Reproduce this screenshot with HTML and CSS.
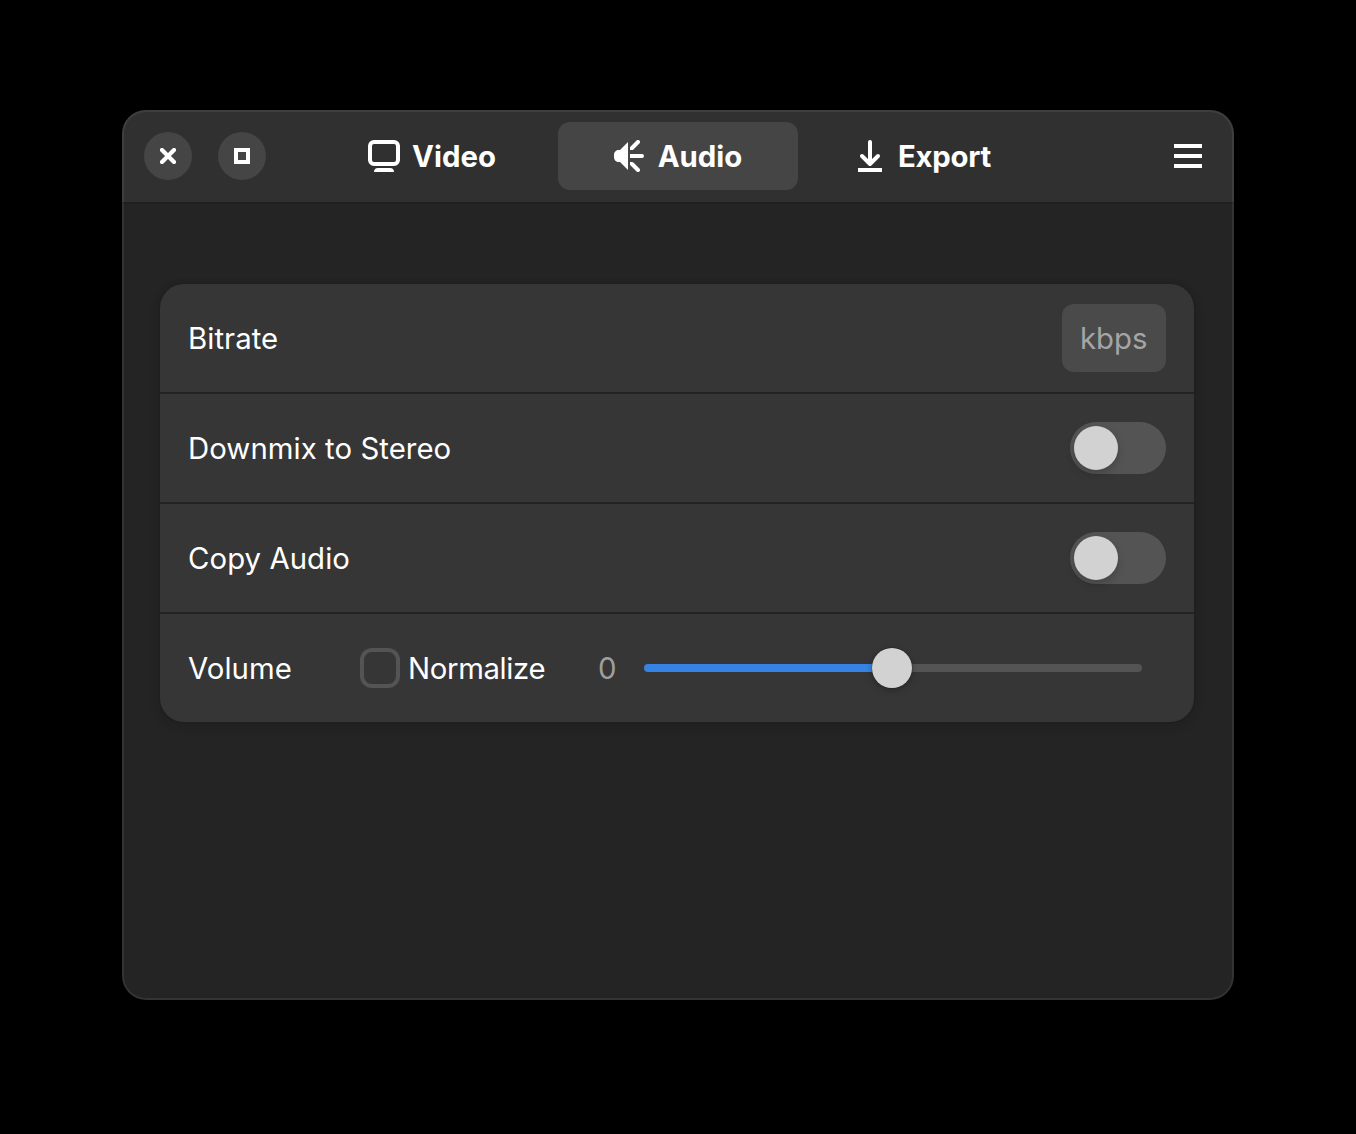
FILE: index.html
```html
<!DOCTYPE html>
<html lang="en">
<head>
<meta charset="utf-8">
<title>Audio</title>
<link rel="stylesheet" href="styles.css">
</head>
<body>
<main class="window">
  <header class="headerbar">
    <div class="controls">
      <button class="control" aria-label="Close">
        <svg width="16" height="16" viewBox="0 0 16 16"><path d="M2 2 14 14M14 2 2 14" stroke="#fff" stroke-width="4.2" stroke-linecap="round"/></svg>
      </button>
      <button class="control" aria-label="Maximize">
        <svg width="16" height="16" viewBox="0 0 16 16"><path d="M2 2H14V14H2Z" fill="none" stroke="#fff" stroke-width="4"/></svg>
      </button>
    </div>
    <nav class="tabs">
      <button class="tab">
        <svg width="32" height="32" viewBox="0 0 32 32"><rect x="2" y="2" width="28" height="22" rx="4" fill="none" stroke="#fff" stroke-width="4"/><path d="M6 32C6 29.5 7.5 28 10 28H22C24.5 28 26 29.5 26 32Z" fill="#fff"/></svg>
        <span>Video</span>
      </button>
      <button class="tab tab-active">
        <svg width="32" height="32" viewBox="0 0 32 32"><path d="M14 2V30L6 22H5C2 22 0 20 0 17V15C0 12 2 10 5 10H6ZM16 14H28A2 2 0 0 1 28 18H16ZM16 8H18V10H16ZM16 22H18V24H16Z" fill="#fff"/><path d="M18 8 24 2M18 24 24 30" stroke="#fff" stroke-width="4" stroke-linecap="round"/></svg>
        <span>Audio</span>
      </button>
      <button class="tab tab-export">
        <svg width="32" height="32" viewBox="0 0 32 32"><path d="M16 2V23M8 16 16 24 24 16" fill="none" stroke="#fff" stroke-width="4" stroke-linecap="round" stroke-linejoin="round"/><path d="M4 28H28V32H4Z" fill="#fff"/></svg>
        <span>Export</span>
      </button>
    </nav>
    <button class="menu" aria-label="Menu">
      <svg width="28" height="24" viewBox="0 0 28 24"><path d="M0 0H28V4H0ZM0 10H28V14H0ZM0 20H28V24H0Z" fill="#fff"/></svg>
    </button>
  </header>
  <section class="content">
    <div class="list">
      <div class="row"><span class="label">Bitrate</span><div class="entry">kbps</div></div>
      <div class="row"><span class="label">Downmix to Stereo</span><div class="switch"><div class="knob"></div></div></div>
      <div class="row"><span class="label">Copy Audio</span><div class="switch"><div class="knob"></div></div></div>
      <div class="row volume">
        <span class="label volume-label">Volume</span>
        <span class="checkbox"></span>
        <span class="normalize">Normalize</span>
        <span class="value">0</span>
        <div class="slider"><div class="fill"></div><div class="thumb"></div><div class="trough"></div></div>
      </div>
    </div>
  </section>
</main>
</body>
</html>
```
FILE: styles.css
```css
* { box-sizing: border-box; }
body {
  margin: 0;
  height: 1134px;
  padding: 110px 122px;
  background: #000;
  color: #fff;
  font: 376 29.33px/36px Inter, sans-serif;
}
button {
  border: 0;
  padding: 0;
  background: none;
  color: inherit;
  font: inherit;
}
svg { display: block; flex: none; }
.window {
  position: relative;
  width: 1112px;
  height: 890px;
  border-radius: 24px;
  background: #242424;
  overflow: hidden;
}
.window::after {
  content: "";
  position: absolute;
  inset: 0;
  border-radius: 24px;
  box-shadow: inset 0 0 0 2px rgba(255, 255, 255, .07);
  pointer-events: none;
}
.headerbar {
  display: grid;
  grid-template-columns: 190px 732px 190px;
  align-items: center;
  height: 94px;
  border-bottom: 2px solid #1f1f1f;
  background: #303030;
}
.controls { display: flex; gap: 26px; padding-left: 22px; }
.control {
  display: flex;
  align-items: center;
  justify-content: center;
  width: 48px;
  height: 48px;
  border-radius: 50%;
  background: #454545;
}
.tabs { display: flex; gap: 6px; }
.tab {
  display: flex;
  align-items: center;
  justify-content: center;
  gap: 12px;
  width: 240px;
  height: 68px;
  border-radius: 12px;
  font-weight: 700;
}
.tab span, .label, .normalize, .value { padding-top: 2px; }
.tab-export { padding-right: 3px; letter-spacing: -.3px; }
.tab-active { background: #454545; }
.menu { justify-self: end; margin-right: 32px; }
.content { padding: 80px 40px 0 38px; }
.list {
  border-radius: 24px;
  background: #363636;
  box-shadow: 0 0 0 2px rgba(0, 0, 0, .03), 0 2px 6px 2px rgba(0, 0, 0, .07), 0 4px 12px 4px rgba(0, 0, 0, .03);
}
.row {
  display: flex;
  align-items: center;
  justify-content: space-between;
  height: 110px;
  padding: 0 28px;
  border-bottom: 2px solid #222;
}
.row:last-child { height: 108px; border-bottom: 0; }
.label { letter-spacing: .06px; }
.entry {
  width: 104px;
  height: 68px;
  padding: 17px 0 0 18px;
  border-radius: 12px;
  background: #4a4a4a;
  color: #a5a5a5;
}
.switch {
  width: 96px;
  height: 52px;
  padding: 4px;
  border-radius: 26px;
  background: #545454;
}
.knob {
  width: 44px;
  height: 44px;
  border-radius: 50%;
  background: #d2d2d2;
  box-shadow: 0 4px 8px rgba(0, 0, 0, .2);
}
.volume { justify-content: flex-start; }
.volume-label { width: 172px; }
.checkbox {
  width: 40px;
  height: 40px;
  border: 4px solid #545454;
  border-radius: 12px;
}
.normalize { width: 190px; margin-left: 8px; letter-spacing: -.35px; }
.value { width: 46px; color: #9e9e9e; }
.slider { display: flex; align-items: center; width: 498px; }
.fill { width: 228px; height: 8px; border-radius: 4px 0 0 4px; background: #3584e4; }
.trough { flex: 1; height: 8px; border-radius: 0 4px 4px 0; background: #545454; }
.thumb {
  z-index: 1;
  width: 40px;
  height: 40px;
  border-radius: 50%;
  background: #d2d2d2;
  box-shadow: 0 0 0 1px rgba(0, 0, 0, .1), 0 2px 6px 1px rgba(0, 0, 0, .22);
}
```
